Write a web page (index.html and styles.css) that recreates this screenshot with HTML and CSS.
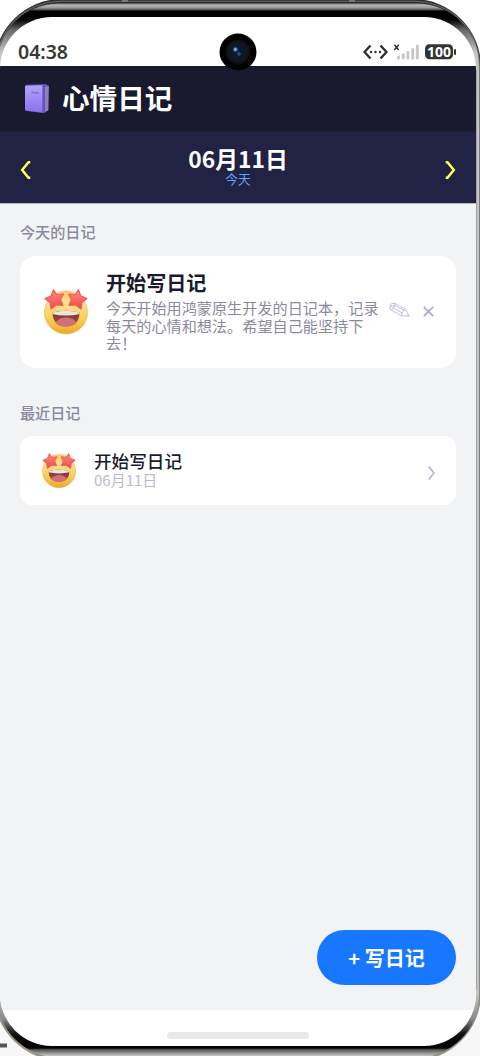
FILE: index.html
```html
<!DOCTYPE html>
<html lang="zh-CN">
<head>
<meta charset="utf-8">
<title>心情日记</title>
<link rel="stylesheet" href="styles.css">
</head>
<body>
<svg width="0" height="0" class="defs" aria-hidden="true">
  <defs>
    <linearGradient id="face" x1="0" y1="0" x2="0" y2="1"><stop offset="0" stop-color="#ffd070"/><stop offset=".3" stop-color="#fbdf92"/><stop offset=".65" stop-color="#f7cf52"/><stop offset="1" stop-color="#eda82c"/></linearGradient>
    <linearGradient id="star" x1="0" y1="0" x2="0" y2="1"><stop offset="0" stop-color="#ff8a78"/><stop offset="1" stop-color="#ec4a4c"/></linearGradient>
    <linearGradient id="mouth" x1="0" y1="0" x2="0" y2="1"><stop offset="0" stop-color="#713532"/><stop offset="1" stop-color="#b34a4c"/></linearGradient>
    <clipPath id="mouthClip"><path d="M8.500 23.500Q22 20 35.500 23.500Q35 37.500 22 37.500Q9 37.500 8.500 23.500Z"/></clipPath>
    <symbol id="starry" viewBox="0 0 44 46">
      <circle cx="22" cy="23.500" r="21.500" fill="url(#face)" stroke="#e6ad4d" stroke-width=".6"/>
      <path d="M8.500 23.500Q22 20 35.500 23.500Q35 37.500 22 37.500Q9 37.500 8.500 23.500Z" fill="url(#mouth)"/>
      <g clip-path="url(#mouthClip)"><ellipse cx="22" cy="36" rx="11" ry="7.500" fill="#d27073"/><path d="M8 22Q22 19 36 22V25Q22 28 8 25Z" fill="#e9e5e0"/></g>
      <g fill="url(#star)" stroke="#f05c56" stroke-width="1.200" stroke-linejoin="round">
        <path d="M9.500 .8L12.800 5.500L19.500 5L16.500 10.500L19 16.500L12.500 15.800L7 20L6 13.500L1 9.500L7.300 6.800Z"/>
        <path d="M34.500 .8L31.200 5.500L24.500 5L27.500 10.500L25 16.500L31.500 15.800L37 20L38 13.500L43 9.500L36.700 6.800Z"/>
      </g>
    </symbol>
    <linearGradient id="cover" x1="0" y1="0" x2="0" y2="1"><stop offset="0" stop-color="#b0a2fa"/><stop offset="1" stop-color="#8c72ee"/></linearGradient>
    <linearGradient id="shell" gradientUnits="userSpaceOnUse" x1="0" y1="0" x2="0" y2="1056">
      <stop offset="0" stop-color="#555"/><stop offset=".0035" stop-color="#8a8c8a"/><stop offset=".005" stop-color="#b4b4b2"/><stop offset=".0075" stop-color="#999"/><stop offset=".0095" stop-color="#444"/><stop offset=".0105" stop-color="#000"/><stop offset=".019" stop-color="#050505"/><stop offset=".028" stop-color="#666"/><stop offset=".05" stop-color="#c5c5c5"/>
      <stop offset=".94" stop-color="#c5c5c5"/><stop offset=".965" stop-color="#8a8a8a"/><stop offset=".979" stop-color="#111"/><stop offset=".9925" stop-color="#000"/><stop offset=".994" stop-color="#555"/><stop offset="1" stop-color="#c9c9c9"/>
    </linearGradient>
    <linearGradient id="rim" gradientUnits="userSpaceOnUse" x1="0" y1="0" x2="0" y2="1056"><stop offset="0" stop-color="#2b2d2b"/><stop offset=".12" stop-color="#5a5a5a"/><stop offset=".9" stop-color="#666"/><stop offset=".96" stop-color="#9c9283"/><stop offset="1" stop-color="#a2998a"/></linearGradient>
    <radialGradient id="lens"><stop offset="0" stop-color="#16335c"/><stop offset=".45" stop-color="#101b31"/><stop offset=".8" stop-color="#121317"/><stop offset="1" stop-color="#0a0a0b"/></radialGradient>
  </defs>
</svg>
<div class="phone">
  <svg class="shell" width="480" height="1056" viewBox="0 0 480 1056" aria-hidden="true">
    <path d="M0 1045.500H7" stroke="#555" stroke-width="4"/>
    <rect x="-6" y="-1" width="487" height="1062" rx="68" fill="url(#rim)"/>
    <rect x="-4" y="1.200" width="483.500" height="1058" rx="65" fill="none" stroke="#898b88" stroke-width=".7"/>
    <rect x="-3" y="3.500" width="482" height="1054" rx="62" fill="url(#shell)"/>
    <path d="M476.500 70V990" stroke="#a2a2a2"/>
    <path d="M122 .5H128M349 .5H355" stroke="#777" stroke-width="3"/>
  </svg>
  <main class="screen">
    <div class="status">
      <span class="clock">04:38</span>
      <svg class="indicators" width="98" height="20" viewBox="0 0 98 20" aria-label="100">
        <path d="M8.500 3.500L2.500 10L8.500 16.500M18.500 3.500L24.500 10L18.500 16.500" fill="none" stroke="#303030" stroke-width="2.400" stroke-linejoin="round"/>
        <g fill="#303030"><circle cx="9" cy="10" r="1.200"/><circle cx="13.500" cy="10" r="1.200"/><circle cx="18" cy="10" r="1.200"/></g>
        <path d="M32.300 2.800L36.700 8M36.700 2.800L32.300 8" stroke="#303030" stroke-width="1.500"/>
        <path d="M36.500 15V16.300M41.200 12.800V16.300M45.900 10.500V16.300M50.700 7.500V16.300M55.300 4V16.300" stroke="#c7c7c7" stroke-width="2.900" stroke-linecap="round"/>
        <rect x="63" y="2.300" width="28" height="15" rx="4.500" fill="#333"/><path d="M93 8V12" stroke="#333" stroke-width="2" stroke-linecap="round"/>
        <text x="77" y="15" text-anchor="middle" class="charge">100</text>
      </svg>
    </div>
    <header class="header">
      <svg width="26" height="30" viewBox="0 0 26 30" aria-hidden="true">
        <path d="M1 2Q1 .8 3 .7L22 .2L25 2L24.500 26.500L20 29L2 27Q1 27 1 25Z" fill="#7358c4"/>
        <path d="M21 3L24.500 2.500L24 26L20.500 28Z" fill="#8c83b5"/>
        <path d="M1 3.200Q1 1.800 2.500 1.700L18.500 1.200V28.600L2.200 26.600Q1 26.400 1 25Z" fill="url(#cover)"/>
        <path d="M18.800 2L21 1.500V28L18.800 28.800Z" fill="#674bc7"/>
        <path d="M7.500 8.500L15 9.200" stroke="#7b65d3" stroke-width="1.500" stroke-dasharray="1.300 .4"/>
      </svg>
      <h1>心情日记</h1>
    </header>
    <nav class="datebar">
      <svg width="12" height="18" viewBox="0 0 12 18"><path d="M10.300 1.300H8.500L2.200 9L8.500 16.700H10.300" fill="none" stroke="#ffff54" stroke-width="2.500"/></svg>
      <div class="date"><strong>06月11日</strong><span>今天</span></div>
      <svg width="12" height="18" viewBox="0 0 12 18"><path d="M1.700 1.300H3.500L9.800 9L3.500 16.700H1.700" fill="none" stroke="#ffff54" stroke-width="2.500"/></svg>
    </nav>
    <section class="content">
      <h2>今天的日记</h2>
      <article class="entry">
        <svg class="mood" width="44" height="46"><use href="#starry"/></svg>
        <div class="copy">
          <h3>开始写日记</h3>
          <p>今天开始用鸿蒙原生开发的日记本，记录<br>每天的心情和想法。希望自己能坚持下<br>去！</p>
        </div>
        <svg class="edit" width="22" height="17" viewBox="0 0 22 17" fill="none" stroke="#bdbbcf" stroke-width=".9"><path d="M1 5Q1 1 5 1L15.500 6.500L20.500 14.300L12 13.500L2 8Q.7 7 1 5ZM5 1Q6.500 2.500 5.200 5Q4 7.700 2 8M6 3.500L15.500 8.500M4.500 6.300L13.500 11.200M15.500 6.500L12 13.500M17.500 13.800L19 12"/><circle cx="3.500" cy="4.500" r="1.200"/></svg>
        <svg class="remove" width="11" height="11" viewBox="0 0 11 11"><path d="M.8.8L10.200 10.200M10.200.8L.8 10.200" stroke="#b0aec6" stroke-width="1.800"/></svg>
      </article>
      <h2 class="recent-title">最近日记</h2>
      <article class="recent">
        <svg width="34" height="35.500"><use href="#starry"/></svg>
        <div class="recent-copy"><h4>开始写日记</h4><time>06月11日</time></div>
        <svg class="chevron" width="9" height="14" viewBox="0 0 9 14"><path d="M1.500 1.200H2.300L7 7L2.300 12.800H1.500" fill="none" stroke="#bab8cc" stroke-width="1.800"/></svg>
      </article>
      <button class="compose"><span>+</span> 写日记</button>
    </section>
    <footer class="homebar"><i></i></footer>
  </main>
  <svg class="camera" width="38" height="38" viewBox="0 0 38 38" aria-hidden="true"><circle cx="19" cy="19" r="18.500" fill="#020203"/><circle cx="19" cy="19" r="12.500" fill="url(#lens)"/><circle cx="19" cy="19" r="7" fill="#0c1830"/><circle cx="16.500" cy="16.500" r="2.200" fill="#3d82bd"/><circle cx="16.300" cy="16.300" r=".9" fill="#a9dcf4"/><circle cx="20" cy="21" r="1.800" fill="#245383"/></svg>
</div>
</body>
</html>
```
FILE: styles.css
```css
* { box-sizing: border-box; }
body { margin: 0; background: #fff; font-family: "Noto Sans CJK SC", "Noto Sans", sans-serif; }
h1, h2, h3, h4, p { margin: 0; }
svg { flex: none; display: block; }
.defs { position: absolute; }
.phone { position: relative; width: 480px; height: 1056px; overflow: hidden; padding: 17px 4px 10px 0; background: linear-gradient(#fff 95%, #f7f7f7 96%); }
.shell { position: absolute; left: 0; top: 0; }
.screen { position: relative; width: 476px; height: 1029px; border-radius: 52px; overflow: hidden; background: #fff; display: flex; flex-direction: column; }
.status { height: 49px; flex: none; display: flex; justify-content: space-between; align-items: flex-start; padding: 25px 16px 0 18px; }
.clock { font: 600 19.5px/20px "Noto Sans", sans-serif; color: #383838; }
.charge { font: 700 14px "Noto Sans", sans-serif; fill: #fff; }
.header { height: 65px; flex: none; background: #1a1a2e; display: flex; align-items: center; gap: 12px; padding: 0 24px; }
.header h1 { color: #fff; font-size: 27.6px; line-height: 38px; font-weight: 700; margin-top: -4px; }
.datebar { height: 73px; flex: none; background: #222244; border-top: 1px solid #1d1d35; border-bottom: 1px solid #b9b9c5; display: flex; align-items: center; justify-content: space-between; padding: 5px 20px 0; }
.date { display: flex; flex-direction: column; align-items: center; color: #fff; margin-top: -7px; }
.date strong { font-size: 22.8px; line-height: 25px; }
.date span { color: #60a5f5; font-size: 12.7px; line-height: 16px; }
.content { flex: 1; background: #f1f3f5; padding: 17px 20px 25px; display: flex; flex-direction: column; }
h2 { font-size: 15.1px; line-height: 20px; color: #8b899c; font-weight: 500; }
.entry { height: 112px; margin-top: 15px; border-radius: 16px; background: #fff; display: flex; align-items: flex-start; padding-left: 24px; }
.mood { margin-top: 33px; }
.copy { width: 273px; margin: 14px 0 0 18px; white-space: nowrap; }
.copy h3 { font-size: 20.1px; line-height: 26px; color: #1a1a2e; font-weight: 700; }
.copy p { font-size: 15.15px; line-height: 17.7px; margin-top: 3px; color: #8b899c; }
.edit { margin: 46px 0 0 10px; }
.remove { margin: 50px 0 0 12px; }
.recent-title { margin-top: 34px; }
.recent { height: 69px; margin-top: 14px; border-radius: 12px; background: #fff; display: flex; align-items: center; padding: 0 20px 0 22px; }
.recent-copy { margin: -2px 0 0 18px; }
.recent-copy h4 { font-size: 17.6px; line-height: 20px; color: #1a1a2e; font-weight: 500; }
.recent-copy time { display: block; font-size: 15px; line-height: 18px; color: #bdbbcf; }
.chevron { margin: 4px 0 0 auto; }
.compose { margin: auto 0 0 auto; width: 139px; height: 55px; border: 0; border-radius: 28px; background: #1777ff; color: #fff; font: 700 20px/28px "Noto Sans CJK SC", sans-serif; padding: 0; }
.homebar { height: 36px; flex: none; display: flex; justify-content: center; padding-top: 22px; }
.homebar i { width: 142px; height: 7px; border-radius: 4px; background: #e8e8e8; }
.camera { position: absolute; left: 219px; top: 32.5px; }
```
